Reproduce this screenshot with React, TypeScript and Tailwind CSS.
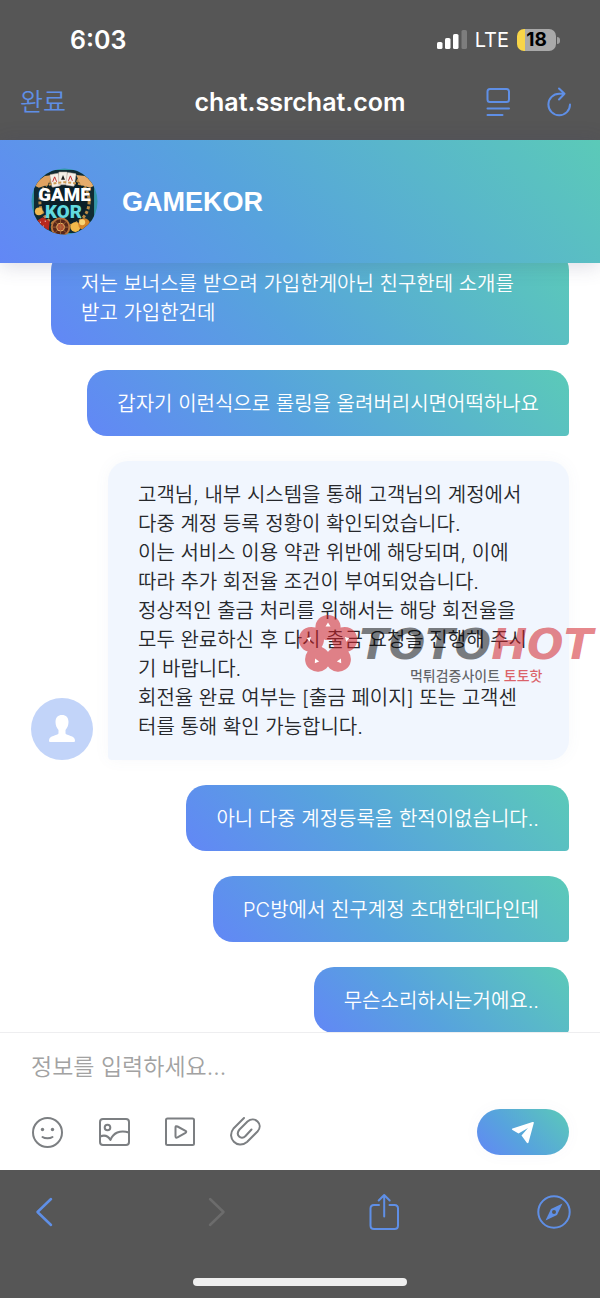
import { useState } from "react";

type Message = {
  id: number;
  from: "me" | "agent";
  text: string;
};

const MESSAGES: Message[] = [
  { id: 1, from: "me", text: "저는 보너스를 받으려 가입한게아닌 친구한테 소개를\n받고 가입한건데" },
  { id: 2, from: "me", text: "갑자기 이런식으로 롤링을 올려버리시면어떡하나요" },
  {
    id: 3,
    from: "agent",
    text: "고객님, 내부 시스템을 통해 고객님의 계정에서\n다중 계정 등록 정황이 확인되었습니다.\n이는 서비스 이용 약관 위반에 해당되며, 이에\n따라 추가 회전율 조건이 부여되었습니다.\n정상적인 출금 처리를 위해서는 해당 회전율을\n모두 완료하신 후 다시 출금 요청을 진행해 주시\n기 바랍니다.\n회전율 완료 여부는 [출금 페이지] 또는 고객센\n터를 통해 확인 가능합니다.",
  },
  { id: 4, from: "me", text: "아니 다중 계정등록을 한적이없습니다.." },
  { id: 5, from: "me", text: "PC방에서 친구계정 초대한데다인데" },
  { id: 6, from: "me", text: "무슨소리하시는거에요.." },
];

const PETAL_ANGLES = [0, 72, 144, 216, 288];

function StatusBar() {
  return (
    <div className="flex h-16 items-center justify-between pt-4 pr-10 pl-[70px] text-white">
      <span className="text-[25px] leading-8 font-semibold">6:03</span>
      <div className="flex items-center gap-2">
        <svg width="30" height="20" viewBox="0 0 30 20" fill="#fff" aria-hidden="true">
          <rect x="0" y="12" width="5.5" height="7" rx="1.6" />
          <rect x="8" y="8" width="5.5" height="11" rx="1.6" />
          <rect x="16" y="4" width="5.5" height="15" rx="1.6" />
          <rect x="24.5" y="0" width="5.5" height="19" rx="1.6" fill="#7d7d7d" />
        </svg>
        <span className="text-xl leading-6">LTE</span>
        <div className="flex items-center gap-px">
          <div className="flex h-[22px] w-[39px] items-center justify-center rounded-[7px] bg-linear-to-r from-[#f8d548] from-20% to-[#a9a9a9] to-20% text-[19px] leading-5 font-bold text-black">
            18
          </div>
          <span className="h-[7px] w-[3px] rounded-r-full bg-[#a0a0a0]" />
        </div>
      </div>
    </div>
  );
}

function BrowserBar() {
  return (
    <div className="grid h-[76px] grid-cols-[1fr_auto_1fr] items-center px-7 text-[#5f8fe6]">
      <button type="button" className="-ml-2 justify-self-start text-[25px] leading-8 font-[350]">
        완료
      </button>
      <h1 className="text-[25px] leading-8 font-semibold text-white">chat.ssrchat.com</h1>
      <div className="flex items-center gap-9 justify-self-end">
        <button type="button" aria-label="페이지 설정">
          <svg width="25" height="30" viewBox="0 0 25 30" fill="none" stroke="currentColor" strokeWidth="2" strokeLinecap="round">
            <rect x="1.5" y="2" width="21.5" height="13" rx="2.5" />
            <path d="M1.5 21.5H23M1.5 28H16.5" />
          </svg>
        </button>
        <button type="button" aria-label="새로고침">
          <svg width="25" height="30" viewBox="0 0 25 30" fill="none" stroke="currentColor" strokeWidth="2" strokeLinecap="round" strokeLinejoin="round">
            <path d="M23 17.5A10.8 10.8 0 1 1 12.2 6.7H17.5M12 1.5L17.5 6.8L12 12.5" />
          </svg>
        </button>
      </div>
    </div>
  );
}

function Logo() {
  return (
    <svg width="67" height="67" viewBox="0 0 68 68" role="img" aria-label="GAMEKOR">
      <defs>
        <clipPath id="logo-clip">
          <circle cx="34" cy="34" r="33.5" />
        </clipPath>
      </defs>
      <g clipPath="url(#logo-clip)">
        <rect width="68" height="68" fill="#3296a8" />
        <rect x="3" y="2" width="61" height="64" rx="8" fill="#102b34" />
        <circle cx="34" cy="34" r="25" fill="#0b2029" stroke="#b98a45" strokeWidth="3" strokeDasharray="3 2" />
        <path d="M2 17L14 8L22 7L17 17L8 20Z" fill="#dfa261" />
        <path d="M66 17L55 8L46 7L50 17L60 20Z" fill="#e6ac6c" />
        <g fill="#f4efe8" stroke="#ab9c90" strokeWidth=".5">
          <rect x="20" y="6" width="9" height="13" rx="1" transform="rotate(-10 24 12)" />
          <rect x="28" y="4" width="9" height="13" rx="1" />
          <rect x="36" y="5" width="9" height="13" rx="1" transform="rotate(9 40 11)" />
        </g>
        <path d="M24 9L22 14M24 9L26 14M40 8L38 13M40 8L42 13" stroke="#c53131" />
        <path d="M32.5 7L30.5 12H34.5Z" fill="#222" />
        <path d="M18 17Q34 12 51 17" stroke="#cf9b52" strokeWidth="2" strokeDasharray="3 2" fill="none" />
        <circle cx="8" cy="44" r="4" fill="#efb952" />
        <path d="M5 54L12 50L19 54L18 63L8 64Z" fill="#b8281f" />
        <path d="M9 55h1M14 54h1M12 59h1" stroke="#fff" />
        <circle cx="30" cy="60" r="9" fill="#592719" stroke="#b8733a" strokeWidth="2" />
        <circle cx="30" cy="60" r="4" fill="#b84430" stroke="#e9bb68" />
        <path d="M30 51V69M21 60H39M24 54L36 66M36 54L24 66" stroke="#a96c3c" strokeWidth=".8" />
        <circle cx="45" cy="60" r="5" fill="#f1b94a" />
        <circle cx="54" cy="57" r="6" fill="#d48429" />
        <circle cx="52" cy="55" r="3" fill="#f8d574" />
        <text x="34" y="33" textAnchor="middle" fontSize="19" fontWeight="900" fill="#fff" className="font-['Roboto']">
          GAME
        </text>
        <text x="33" y="51" textAnchor="middle" fontSize="19" fontWeight="900" fill="#61d9df" className="font-['Roboto']">
          KOR
        </text>
      </g>
    </svg>
  );
}

function Watermark() {
  return (
    <div className="pointer-events-none absolute -right-6 bottom-[72px] flex items-start">
      <svg width="62" height="62" viewBox="0 0 62 62" aria-hidden="true">
        <g fill="#d12027" className="opacity-55">
          {PETAL_ANGLES.map((angle) => (
            <circle key={angle} cx="31" cy="14.5" r="12.6" transform={`rotate(${angle} 31 32)`} />
          ))}
        </g>
        <g fill="#fff">
          {PETAL_ANGLES.map((angle) => (
            <path key={angle} d="M31 9.500L33.500 13.500H28.500Z" transform={`rotate(${angle} 31 32)`} />
          ))}
        </g>
      </svg>
      <div className="flex flex-col items-center pt-[11px]">
        <span className="font-['DejaVu_Sans'] text-[43px] leading-10 font-bold whitespace-nowrap text-black/50 italic">
          TOTO<span className="text-[#d12027]/55">HOT</span>
        </span>
        <span className="text-sm leading-6 font-medium whitespace-nowrap text-black/60">
          먹튀검증사이트 <span className="text-[#d12027]/70">토토핫</span>
        </span>
      </div>
    </div>
  );
}

function AgentMessage({ text }: { text: string }) {
  return (
    <div className="relative flex items-end gap-[15px]">
      <span className="flex size-[62px] shrink-0 items-center justify-center rounded-full bg-[#c2d4f9]">
        <svg width="28" height="28" viewBox="0 0 28 28" fill="#fff" aria-hidden="true">
          <path d="M14 0C10 0 7.500 2.500 7.500 7C7.500 10 8.700 13 10.500 15V18.500C9.500 20.500 1 20.500 1 25.500C1 26.500 1.500 27 2.500 27H25.500C26.500 27 27 26.500 27 25.500C27 20.500 18.500 20.500 17.500 18.500V15C19.300 13 20.500 10 20.500 7C20.500 2.500 18 0 14 0Z" />
        </svg>
      </span>
      <p className="min-w-0 flex-1 rounded-[20px] rounded-bl-[4px] bg-[#f1f6fe] px-[30px] pt-5 pb-[18px] whitespace-pre-line text-[#26282c] shadow-[0_0_16px_rgba(90,110,160,0.05)]">
        {text}
      </p>
      <Watermark />
    </div>
  );
}

function MyMessage({ text }: { text: string }) {
  // a message that wraps takes the whole line
  const width = text.includes("\n") ? "self-stretch" : "self-end";

  return (
    <p
      className={`ml-5 rounded-[20px] rounded-br-[4px] bg-linear-[45deg,#6287f6,#57a3dd_42%,#5bcab8] px-[30px] pt-5 pb-[17px] whitespace-pre-line text-white ${width}`}
    >
      {text}
    </p>
  );
}

function Composer() {
  const [draft, setDraft] = useState("");

  return (
    <form
      onSubmit={(event) => {
        event.preventDefault();
        setDraft("");
      }}
      className="z-10 border-t border-[#eeeef0] bg-white px-[31px] pt-4 pb-[15px]"
    >
      <input
        aria-label="메시지"
        value={draft}
        onChange={(event) => setDraft(event.target.value)}
        placeholder="정보를 입력하세요..."
        className="block h-9 w-full text-[23px] font-[350] text-[#26282c] outline-none placeholder:text-[#a2a2a2]"
      />
      <div className="mt-6 flex items-center justify-between">
        <div className="flex items-center gap-[34px] text-[#7c7f82]">
          <button type="button" aria-label="이모티콘">
            <svg width="32" height="32" viewBox="0 0 32 32" fill="none" stroke="currentColor" strokeWidth="2" strokeLinecap="round">
              <circle cx="16.500" cy="16.500" r="14.500" />
              <path d="M11.500 21C14 22.800 19 22.800 21.500 21" />
              <circle cx="11.500" cy="13.500" r="1.700" fill="currentColor" stroke="none" />
              <circle cx="21.500" cy="13.500" r="1.700" fill="currentColor" stroke="none" />
            </svg>
          </button>
          <button type="button" aria-label="사진">
            <svg width="34" height="32" viewBox="0 0 34 32" fill="none" stroke="currentColor" strokeWidth="2" strokeLinejoin="round">
              <rect x="3" y="3" width="29" height="26" rx="3" />
              <circle cx="10.500" cy="11.500" r="2.800" />
              <path d="M3 20.500C8 18.500 11 19.500 13.500 24C16 17 23 13.500 32 16.500" />
            </svg>
          </button>
          <button type="button" aria-label="동영상">
            <svg width="30" height="32" viewBox="0 0 30 32" fill="none" stroke="currentColor" strokeWidth="2" strokeLinejoin="round">
              <rect x="1" y="2.500" width="28" height="26.500" rx="1.500" />
              <path d="M10.500 11.500Q10.500 9.500 12.500 10.500L20.500 14.800Q22 15.800 20.500 16.800L12.500 21.300Q10.500 22.300 10.500 20.300Z" />
            </svg>
          </button>
          <button type="button" aria-label="파일 첨부">
            <svg width="33" height="32" viewBox="0 0 33 32" fill="none" stroke="currentColor" strokeWidth="2" strokeLinecap="round" strokeLinejoin="round">
              <path d="M15 2L4.500 12.500C-3 22 8.500 34 18 26L28.500 15.500C35 8 25.500 -0.500 18.500 5.500L10.500 13.500C6 19 12 24.500 16.500 20L22.500 13.500" />
            </svg>
          </button>
        </div>
        <button
          type="submit"
          aria-label="보내기"
          className="flex h-[46px] w-[92px] items-center justify-center rounded-full bg-linear-[45deg,#6287f6,#57a3dd_42%,#5bcab8] shadow-[0_0_16px_rgba(90,110,160,0.04)]"
        >
          <svg width="24" height="24" viewBox="0 0 24 24" fill="#fff" aria-hidden="true">
            <path d="M1.500 10C0.700 9.500 0.700 8.900 1.500 8.600L21.500 2C22.500 1.700 23 2.200 22.800 3L17.500 22.500C17.200 23.500 16.300 23.500 15.800 22.800L10.500 15.500L17 8L7.500 13.500Z" />
          </svg>
        </button>
      </div>
    </form>
  );
}

function BottomBar() {
  return (
    <footer className="shrink-0 bg-[#565656] px-7 text-[#5f8fe6]">
      <nav className="flex h-[84px] items-center justify-between">
        <button type="button" aria-label="뒤로">
          <svg width="32" height="36" viewBox="0 0 32 36" fill="none" stroke="currentColor" strokeWidth="2.500" strokeLinecap="round" strokeLinejoin="round">
            <path d="M23 5L9.500 18L23 31" />
          </svg>
        </button>
        <button type="button" aria-label="앞으로" disabled className="text-[#6c6c6c]">
          <svg width="32" height="36" viewBox="0 0 32 36" fill="none" stroke="currentColor" strokeWidth="2.500" strokeLinecap="round" strokeLinejoin="round">
            <path d="M13 5L26.500 18L13 31" />
          </svg>
        </button>
        <button type="button" aria-label="공유">
          <svg width="32" height="38" viewBox="0 0 32 38" fill="none" stroke="currentColor" strokeWidth="2" strokeLinecap="round" strokeLinejoin="round">
            <path d="M12 12H7Q3.500 12 3.500 15.500V32.500Q3.500 36 7 36H27.500Q31 36 31 32.500V15.500Q31 12 27.500 12H22.500M17.200 23.500V2M11.700 7.500L17.200 2L22.700 7.500" />
          </svg>
        </button>
        <button type="button" aria-label="브라우저에서 열기">
          <svg width="36" height="36" viewBox="0 0 36 36" aria-hidden="true">
            <circle cx="18" cy="18" r="15.700" fill="none" stroke="currentColor" strokeWidth="2" />
            <path d="M26.500 9.500L21 21L9.500 26.500L15 15Z" fill="currentColor" />
            <circle cx="18" cy="18" r="2" fill="#565656" />
          </svg>
        </button>
      </nav>
      <div className="flex h-11 justify-center pt-6">
        <span className="h-2 w-[214px] rounded-full bg-[#efefef]" />
      </div>
    </footer>
  );
}

export default function App() {
  return (
    <div className="flex h-screen flex-col bg-white font-['Inter','Noto_Sans_CJK_KR',sans-serif]">
      <div className="shrink-0 bg-[#565656]">
        <StatusBar />
        <BrowserBar />
      </div>

      <header className="z-10 flex shrink-0 items-center gap-6 bg-linear-[45deg,#6287f6,#57a3dd_42%,#5bcab8] px-[31px] py-7 shadow-[0_2px_20px_rgba(60,60,110,0.2)]">
        <Logo />
        <h2 className="font-['Liberation_Sans'] text-[27px] leading-8 font-bold text-white">GAMEKOR</h2>
      </header>

      <main className="-mb-px flex min-h-0 flex-1 flex-col-reverse overflow-y-auto [scrollbar-width:none]">
        <div className="flex flex-col gap-[25px] px-[31px] text-xl leading-[29px] font-[350]">
          {MESSAGES.map((message) =>
            message.from === "me" ? (
              <MyMessage key={message.id} text={message.text} />
            ) : (
              <AgentMessage key={message.id} text={message.text} />
            ),
          )}
        </div>
      </main>

      <Composer />
      <BottomBar />
    </div>
  );
}
